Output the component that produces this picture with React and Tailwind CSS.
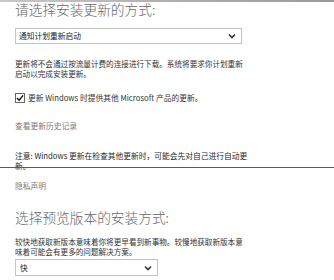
import React from "react";

const Chevron = () => (
  <svg width="8" height="6" viewBox="0 0 8 6" className="block">
    <path d="M1 1.5 L4 4.5 L7 1.5" fill="none" stroke="#333" strokeWidth="1.6" />
  </svg>
);

export default function App() {
  return (
    <div
      className="relative w-[334px] h-[280px] overflow-hidden bg-white text-[#2a2a2a]"
      style={{ fontFamily: '"Noto Sans CJK SC", "Noto Sans", sans-serif' }}
    >
      <div className="h-[2px] bg-gradient-to-r from-[#c8c8c8] to-[#999]" />
      <div className="pl-[15px]">
        <h1 className="text-[13.7px] leading-[15px] font-light text-[#666]">请选择安装更新的方式:</h1>

        <div className="mt-[11px] w-[227px] h-[16px] border border-[#c4c4c4] flex items-center justify-between pl-[3px] pr-[5px]">
          <span className="text-[7.75px] leading-none text-[#222]">通知计划重新启动</span>
          <Chevron />
        </div>

        <p className="mt-[15px] text-[7.6px] leading-[10px] text-[#333]">
          更新将不会通过按流量计费的连接进行下载。系统将要求你计划重新
          <br />
          启动以完成安装更新。
        </p>

        <div className="mt-[13px] h-[11px] flex items-center gap-[3px]">
          <div className="w-[10px] h-[10px] border border-[#666] flex items-center justify-center">
            <svg width="9" height="8" viewBox="0 0 9 8">
              <path d="M1 4 L3.5 6.5 L8 1" fill="none" stroke="#111" strokeWidth="1.6" />
            </svg>
          </div>
          <span className="text-[7.75px] leading-none text-[#333]">更新 Windows 时提供其他 Microsoft 产品的更新。</span>
        </div>

        <div className="mt-[18px] text-[7.75px] leading-[10px] text-[#7a7a7a]">查看更新历史记录</div>

        <p className="mt-[20px] text-[7.75px] leading-[9.5px] text-[#2a2a2a]">
          注意: Windows 更新在检查其他更新时，可能会先对自己进行自动更
          <br />
          新。
        </p>

        <div className="mt-[11px] text-[7.75px] leading-[10px] text-[#7a7a7a]">隐私声明</div>

        <h2 className="mt-[19px] text-[13.7px] leading-[15px] font-light text-[#666]">选择预览版本的安装方式:</h2>

        <p className="mt-[12px] text-[7.6px] leading-[10px] text-[#333]">
          较快地获取新版本意味着你将更早看到新事物。较慢地获取新版本意
          <br />
          味着可能会有更多的问题解决方案。
        </p>

        <div className="mt-[2px] w-[143px] h-[17px] border border-[#c4c4c4] flex items-center justify-between pl-[4px] pr-[5px]">
          <span className="text-[7.75px] leading-none text-[#222]">快</span>
          <Chevron />
        </div>
      </div>

      <div className="absolute left-0 right-0 top-[167px] h-[1px] bg-[#a83a3a]" />
    </div>
  );
}
